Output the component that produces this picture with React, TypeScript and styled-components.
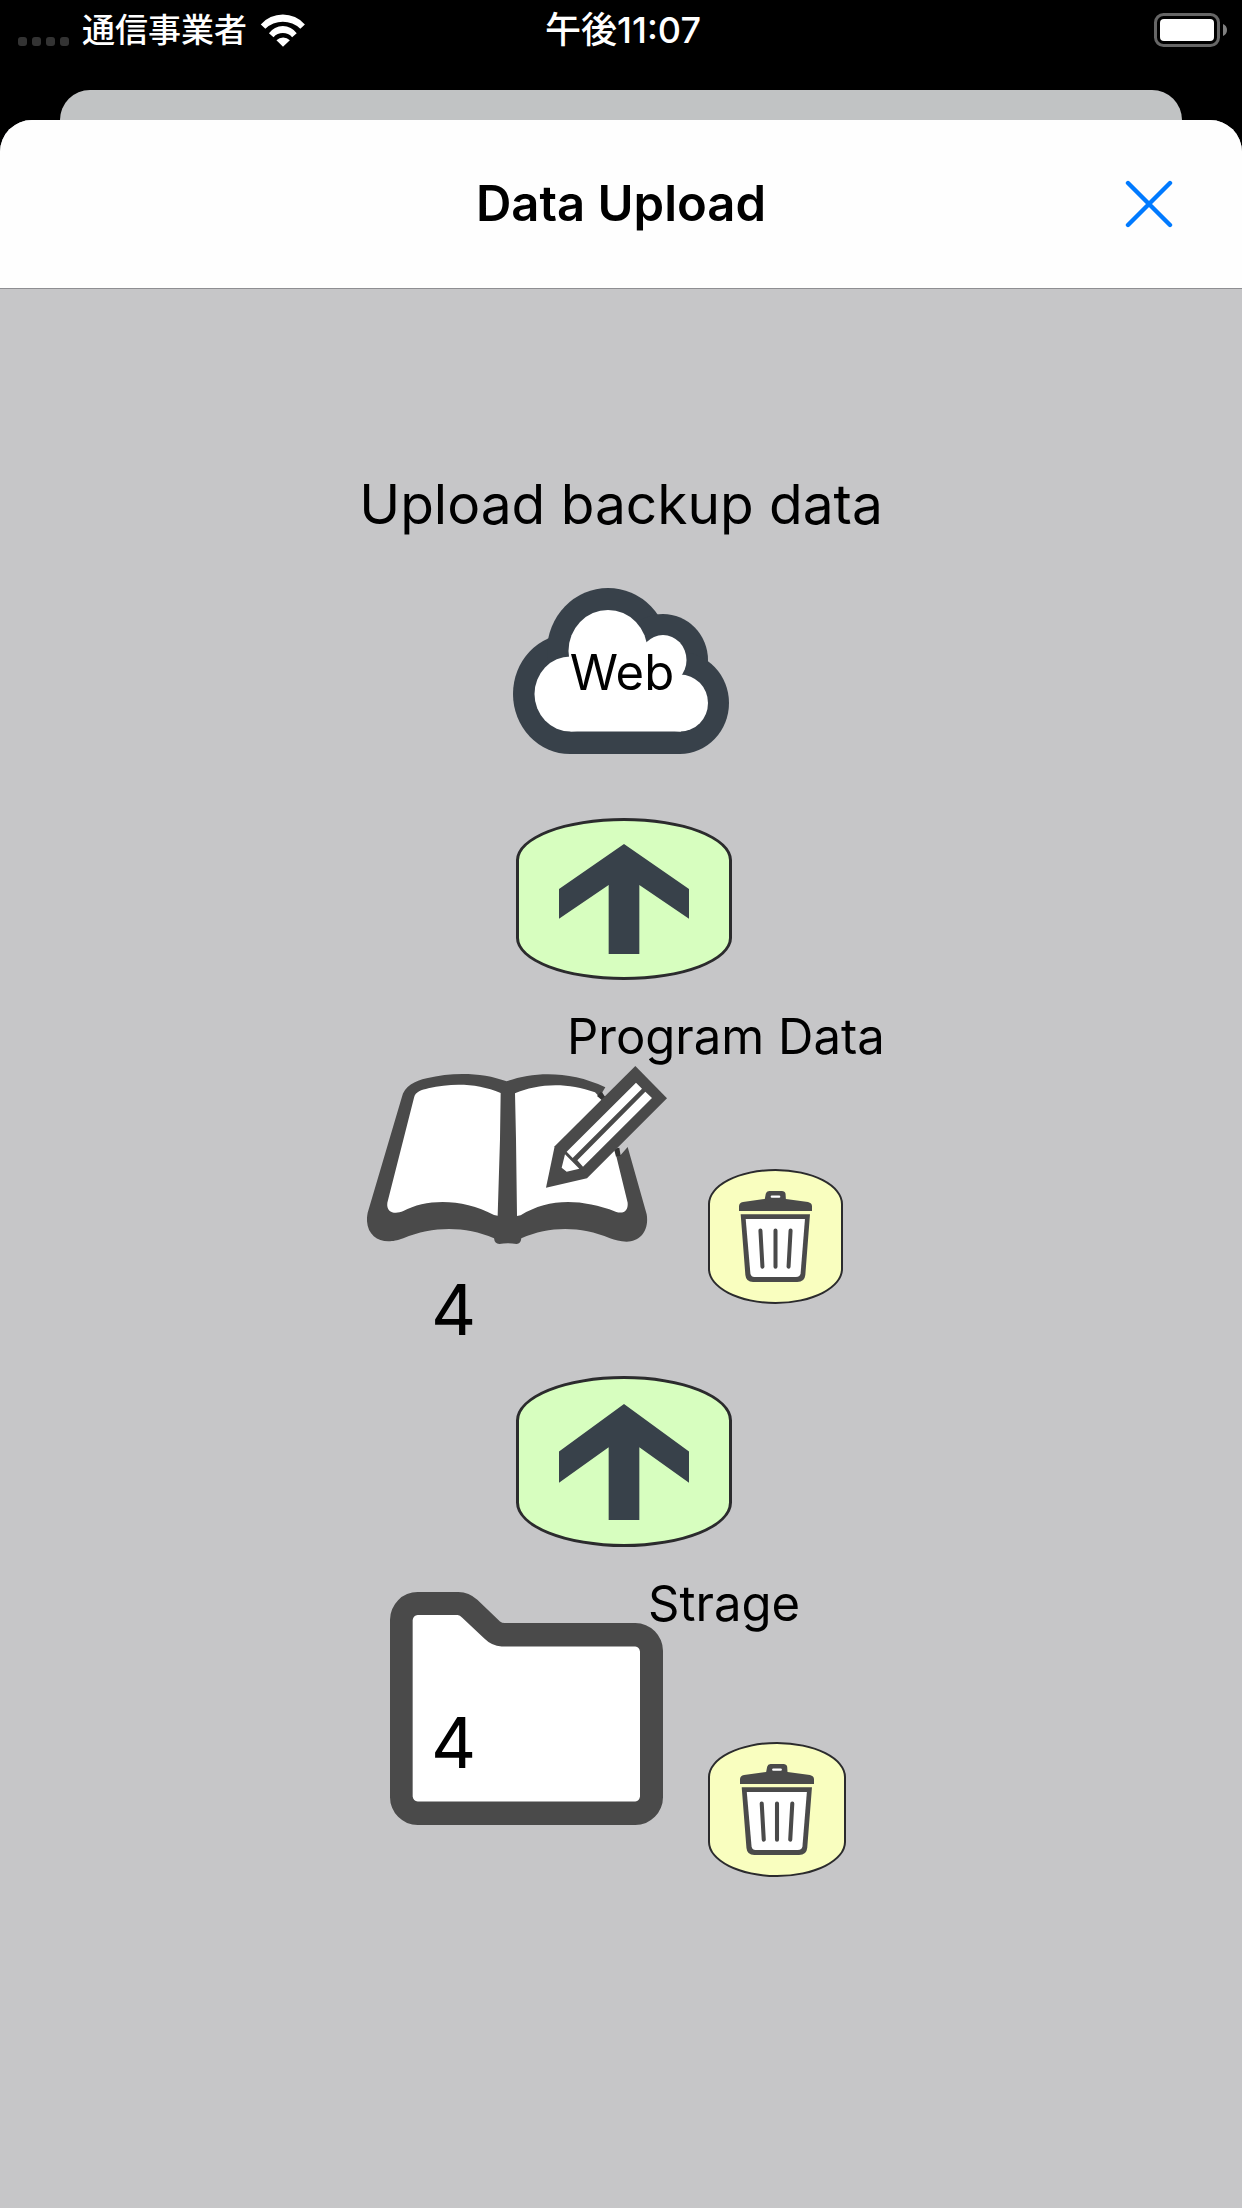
import React from "react";
import styled, { createGlobalStyle } from "styled-components";

const INK = "#4a4a4a";
const SLATE = "#38414a";

const GlobalStyle = createGlobalStyle`
  *, *::before, *::after { box-sizing: border-box; }
  body {
    margin: 0;
    background: #000;
    color: #000;
    font-family: Inter, "Noto Sans CJK JP", sans-serif;
  }
  button { font: inherit; color: inherit; padding: 0; border: 0; cursor: pointer; }
  h1, h2, p { margin: 0; font-weight: 400; }
  svg { display: block; }
`;

const Screen = styled.div`
  min-height: 100vh;
  display: flex;
  flex-direction: column;
`;

const StatusBar = styled.header`
  height: 90px;
  padding: 0 14px 30px 18px;
  display: grid;
  grid-template-columns: 1fr auto 1fr;
  align-items: center;
  color: #fff;
  font-size: 33px;
  font-weight: 500;
  line-height: 40px;
`;

const Carrier = styled.div`
  display: flex;
  align-items: center;
  gap: 13px;
`;

const Clock = styled.span`
  font-size: 36px;
`;

const Signal = styled.div`
  display: flex;
  gap: 5px;
  padding-top: 22px;
`;

const SignalDot = styled.span`
  width: 9px;
  height: 9px;
  border-radius: 3px;
  background: #333;
`;

const BatteryWrap = styled.div`
  justify-self: end;
`;

const CardBehind = styled.div`
  height: 30px;
  margin: 0 60px;
  border-radius: 30px 30px 0 0;
  background: #c1c3c4;
`;

const Sheet = styled.div`
  flex: 1;
  display: flex;
  flex-direction: column;
  overflow: hidden;
  border-radius: 32px 32px 0 0;
  background: #c6c6c8;
`;

const NavBar = styled.div`
  height: 169px;
  padding: 0 63px;
  display: grid;
  grid-template-columns: 1fr auto 1fr;
  align-items: center;
  background: #fefefe;
  border-bottom: 1px solid #8e8e92;
`;

const Title = styled.h1`
  && { font-weight: 600; }
  grid-column: 2;
  font-size: 49px;
  line-height: 60px;
`;

const CloseButton = styled.button`
  justify-self: end;
  width: 60px;
  height: 60px;
  display: grid;
  place-items: center;
  background: transparent;
`;

const Content = styled.main`
  flex: 1;
  display: flex;
  flex-direction: column;
  align-items: center;
  padding: 179px 24px 48px;
`;

const Heading = styled.h2`
  font-size: 55px;
  line-height: 72px;
`;

const Stack = styled.div`
  display: grid;
  > * { grid-area: 1 / 1; }
`;

const CloudBadge = styled(Stack)`
  place-items: center;
  margin: 48px 0 64px;
`;

const Label = styled.p<{ $indent?: number }>`
  padding-left: ${({ $indent = 0 }) => $indent}px;
  font-size: 49px;
  line-height: 60px;
  white-space: nowrap;
`;

const CloudLabel = styled(Label)`
  padding: 4px 0 0 2px;
`;

const Sections = styled.div`
  width: 534px;
  padding-left: 6px;
  display: flex;
  flex-direction: column;
  gap: 24px;
`;

const Section = styled.section`
  display: flex;
  flex-direction: column;
`;

const PillButton = styled.button`
  display: grid;
  place-items: center;
  border-style: solid;
  border-color: #2b2b2d;
  border-radius: 50% / 26%;
`;

const UploadButton = styled(PillButton)<{ $height: number }>`
  align-self: center;
  width: 216px;
  height: ${({ $height }) => $height}px;
  margin-bottom: 27px;
  border-width: 3px;
  background: #d7febf;
`;

const DeleteButton = styled(PillButton)<{ $width: number; $drop: number }>`
  width: ${({ $width }) => $width}px;
  height: 135px;
  margin-top: ${({ $drop }) => $drop}px;
  border-width: 2px;
  background: #f9febf;
`;

const Row = styled.div<{ $overlap: number }>`
  display: grid;
  grid-template-columns: 348px auto;
  justify-content: start;
  align-items: start;
  margin-top: ${({ $overlap }) => -$overlap}px;
`;

const BookFigure = styled.div`
  display: flex;
  flex-direction: column;
  gap: 24px;
  padding-left: 7px;
`;

const FolderFigure = styled(Stack)`
  align-items: end;
  padding-left: 30px;
`;

const Count = styled.p<{ $left: number; $bottom?: number }>`
  padding: 0 0 ${({ $bottom = 0 }) => $bottom}px ${({ $left }) => $left}px;
  font-size: 70px;
  line-height: 84px;
`;

function WifiIcon() {
  return (
    <svg width="46" height="33" viewBox="786 38 138 101" fill="#fff" aria-hidden="true">
      <path d="M787 70A90 90 0 0 1 922 70L908 83A77 77 0 0 0 801 83Z" />
      <path d="M812 97A52 52 0 0 1 897 97L883 109A38 38 0 0 0 826 109Z" />
      <path d="M835 118A30 30 0 0 1 876 118L855 138Z" />
    </svg>
  );
}

function BatteryIcon() {
  return (
    <svg width="74" height="34" viewBox="0 0 74 34" aria-label="Battery full">
      <rect x="1.5" y="1.5" width="63" height="31" rx="8" fill="none" stroke="#666" strokeWidth="3" />
      <rect x="6" y="6" width="54" height="22" rx="4" fill="#fff" />
      <path d="M69 11C71.500 12 73 14 73 17S71.500 22 69 23Z" fill="#808080" />
    </svg>
  );
}

function CloseIcon() {
  return (
    <svg width="48" height="48" viewBox="0 0 48 48" stroke="#007aff" strokeWidth="4.400" strokeLinecap="round">
      <path d="M3 3L45 45M45 3L3 45" />
    </svg>
  );
}

function CloudIcon() {
  return (
    <svg width="216" height="166" viewBox="0 0 216 166" aria-hidden="true">
      <g fill={SLATE}>
        <ellipse cx="57" cy="106" rx="57" ry="60" />
        <ellipse cx="95" cy="63" rx="61" ry="63" />
        <ellipse cx="150" cy="72" rx="45" ry="46" />
        <ellipse cx="167" cy="115" rx="49" ry="51" />
        <rect x="57" y="70" width="110" height="96" />
      </g>
      <g fill="#fff">
        <ellipse cx="57.500" cy="106" rx="36" ry="37.500" />
        <ellipse cx="95" cy="63" rx="39.500" ry="41" />
        <ellipse cx="150" cy="72" rx="23.500" ry="25" />
        <ellipse cx="167" cy="115" rx="28" ry="28.500" />
        <path d="M56 68.500L95 60H140L168 86.500V143.500H57.500Z" />
      </g>
    </svg>
  );
}

function ArrowIcon({ height }: { height: number }) {
  return (
    <svg width="130" height={height} viewBox="177 132 390 330" preserveAspectRatio="none" fill={SLATE} aria-hidden="true">
      <path d="M372 132L567 267V356L418 255V462H326V255L177 356V267Z" />
    </svg>
  );
}

function BookIcon() {
  return (
    <svg width="300" height="178" viewBox="51 195 900 534" aria-hidden="true">
      <path
        fill={INK}
        d="M155 290C163 255 195 240 230 232C310 212 400 215 470 241C550 212 660 208 766 259L757 274L765 290L700 360L790 470L812 462L833 438L890 640C898 690 870 722 830 722C810 722 795 717 780 712C690 675 600 675 514 712Q512 729 500 729Q472 724 448 729Q434 729 432 712C345 675 250 675 160 712C140 719 130 721 115 721C75 721 42 690 53 635Z"
      />
      <g fill="#fff">
        <path d="M192 290C196 272 215 267 235 262C310 245 385 248 452 276L450 415L443 644L432 642C340 592 230 592 160 630C135 641 108 635 112 605Z" />
        <path d="M495 277C560 248 650 242 735 274L760 300L790 440L798 462L833 605C835 630 820 640 797 632C690 592 595 592 512 643L501 645L498 415Z" />
      </g>
      <path fill="#333" d="M741 285L753 272L768 290L756 298ZM792 443L808 440L812 464L798 467Z" />
      <path fill={INK} d="M856 195L951 292L711 532L588 560L614 436Z" />
      <path
        fill="#fff"
        d="M858 245L876 263L668 471L650 452ZM886 272L906 291L699 497L682 478ZM645 460L688 503L650 512L635 500Z"
      />
    </svg>
  );
}

function FolderIcon() {
  return (
    <svg width="273" height="233" viewBox="60 94 819 697" preserveAspectRatio="none" aria-hidden="true">
      <path
        fill={INK}
        d="M60 177A83 83 0 0 1 143 94H265Q297 95 322 117L390 182Q396 187 404 187H796A83 83 0 0 1 879 270V708A83 83 0 0 1 796 791H143A83 83 0 0 1 60 708Z"
      />
      <path
        fill="#fff"
        d="M128 178Q130 165 143 163H263Q270 164 276 170L343 233Q365 255 395 257H796Q808 259 810 272V706Q808 719 796 721H143Q130 719 128 706Z"
      />
    </svg>
  );
}

function TrashIcon({ width }: { width: number }) {
  return (
    <svg width={width} height="91" viewBox="178 122 218 274" preserveAspectRatio="none" aria-hidden="true">
      <path
        fill={INK}
        d="M178 182V168Q178 157 190 155L255 146L258 130Q260 122 268 122H306Q315 122 317 130L318 146L384 155Q396 158 396 168V182ZM183 192H390L376 375Q374 396 352 396H220Q199 396 197 375Z"
      />
      <path fill="#fff" d="M198 206H375L362 370Q361 381 348 381H224Q213 381 212 370Z" />
      <path
        fill="none"
        stroke={INK}
        strokeWidth="12"
        strokeLinecap="round"
        d="M242 241L248 350M287 241V350M332 241L326 350"
      />
      <path stroke="#fff" strokeWidth="7" strokeLinecap="round" d="M276 139H298" />
    </svg>
  );
}

export default function App() {
  return (
    <Screen>
      <GlobalStyle />
      <StatusBar>
        <Carrier>
          <Signal>
            {[0, 1, 2, 3].map((dot) => (
              <SignalDot key={dot} />
            ))}
          </Signal>
          <span lang="ja">通信事業者</span>
          <WifiIcon />
        </Carrier>
        <Clock lang="ja">午後11:07</Clock>
        <BatteryWrap>
          <BatteryIcon />
        </BatteryWrap>
      </StatusBar>
      <CardBehind />
      <Sheet>
        <NavBar>
          <Title>Data Upload</Title>
          <CloseButton type="button" aria-label="Close">
            <CloseIcon />
          </CloseButton>
        </NavBar>
        <Content>
          <Heading>Upload backup data</Heading>
          <CloudBadge>
            <CloudIcon />
            <CloudLabel>Web</CloudLabel>
          </CloudBadge>
          <Sections>
            <Section>
              <UploadButton type="button" $height={162} aria-label="Upload program data">
                <ArrowIcon height={110} />
              </UploadButton>
              <Label $indent={207}>Program Data</Label>
              <Row $overlap={1}>
                <BookFigure>
                  <BookIcon />
                  <Count $left={64}>4</Count>
                </BookFigure>
                <DeleteButton type="button" $width={135} $drop={103} aria-label="Delete program data">
                  <TrashIcon width={73} />
                </DeleteButton>
              </Row>
            </Section>
            <Section>
              <UploadButton type="button" $height={171} aria-label="Upload storage">
                <ArrowIcon height={116} />
              </UploadButton>
              <Label $indent={288}>Strage</Label>
              <Row $overlap={42}>
                <FolderFigure>
                  <FolderIcon />
                  <Count $left={41} $bottom={40}>4</Count>
                </FolderFigure>
                <DeleteButton type="button" $width={138} $drop={150} aria-label="Delete storage">
                  <TrashIcon width={74} />
                </DeleteButton>
              </Row>
            </Section>
          </Sections>
        </Content>
      </Sheet>
    </Screen>
  );
}
